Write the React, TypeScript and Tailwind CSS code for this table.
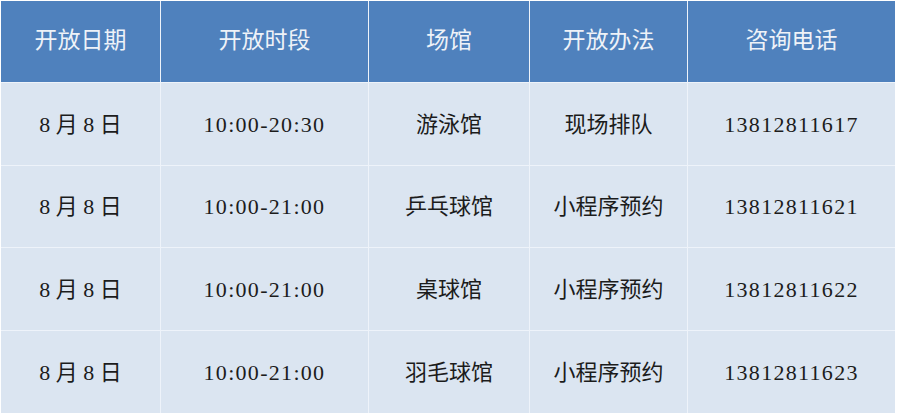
import React from "react";

const headers = ["开放日期", "开放时段", "场馆", "开放办法", "咨询电话"];
const rows = [
  ["8 月 8 日", "10:00-20:30", "游泳馆", "现场排队", "13812811617"],
  ["8 月 8 日", "10:00-21:00", "乒乓球馆", "小程序预约", "13812811621"],
  ["8 月 8 日", "10:00-21:00", "桌球馆", "小程序预约", "13812811622"],
  ["8 月 8 日", "10:00-21:00", "羽毛球馆", "小程序预约", "13812811623"],
];

export default function App() {
  return (
    <div className="w-[899px] h-[416px] bg-white pl-px pt-px overflow-hidden">
      <div
        className="grid w-[894px] grid-cols-[159px_207px_160px_157px_207px] grid-rows-[81px_82px_81px_82px_82px] gap-px bg-[#eef3fa]"
        style={{ fontFamily: '"Liberation Serif", "Noto Sans CJK SC", serif' }}
      >
        {headers.map((h) => (
          <div
            key={h}
            className="flex items-center justify-center bg-[#4f81bd] text-[#eef2f8] text-[23px]"
          >
            {h}
          </div>
        ))}
        {rows.map((r, i) =>
          r.map((c, j) => (
            <div
              key={i + "-" + j}
              className={
                "flex items-center justify-center bg-[#dbe5f1] text-[#1c1c1c] text-[22px] " +
                (j === 1 || j === 4 ? "tracking-[1.3px]" : "")
              }
            >
              {c}
            </div>
          ))
        )}
      </div>
    </div>
  );
}
